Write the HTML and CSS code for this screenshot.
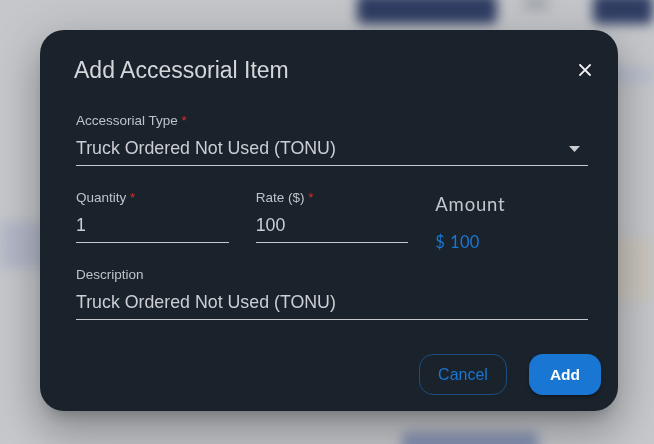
FILE: index.html
```html
<!DOCTYPE html>
<html lang="en">
<head>
<meta charset="utf-8">
<title>Add Accessorial Item</title>
<link rel="stylesheet" href="styles.css">
</head>
<body>
<div class="page" aria-hidden="true">
  <div class="topbar">
    <span class="navy-btn"></span>
    <span class="ghost-icon"></span>
    <span class="navy-btn small"></span>
  </div>
  <div class="strip-right"></div>
  <div class="band">
    <span class="band-left"></span>
    <span class="band-right"></span>
  </div>
  <div class="bottom-row">
    <span class="bottom-blob"></span>
  </div>
</div>

<div class="overlay">
  <div class="dialog" role="dialog" aria-labelledby="dlg-title">
    <div class="dialog-head">
      <h2 id="dlg-title" class="dialog-title">Add Accessorial Item</h2>
      <button class="close-btn" aria-label="Close">
        <svg width="12" height="12" viewBox="0 0 12 12"><path d="M1 1L11 11M11 1L1 11" stroke="#f2f3f4" stroke-width="1.8" stroke-linecap="square"/></svg>
      </button>
    </div>

    <div class="field type-field">
      <div class="label">Accessorial Type <span class="req">*</span></div>
      <div class="input select">
        <span>Truck Ordered Not Used (TONU)</span>
        <svg class="caret" width="11" height="6" viewBox="0 0 11 6"><path d="M0 0H11L5.5 6Z" fill="#c9ccd0"/></svg>
      </div>
    </div>

    <div class="row">
      <div class="field">
        <div class="label">Quantity <span class="req">*</span></div>
        <div class="input">1</div>
      </div>
      <div class="field">
        <div class="label">Rate ($) <span class="req">*</span></div>
        <div class="input">100</div>
      </div>
      <div class="amount">
        <div class="amount-label">Amount</div>
        <div class="amount-value">$ 100</div>
      </div>
    </div>

    <div class="field desc">
      <div class="label">Description</div>
      <div class="input">Truck Ordered Not Used (TONU)</div>
    </div>

    <div class="actions">
      <button class="btn btn-outline">Cancel</button>
      <button class="btn btn-primary">Add</button>
    </div>
  </div>
</div>
</body>
</html>
```
FILE: styles.css
```css
* { box-sizing: border-box; }
html, body { margin: 0; height: 100%; }
body {
  background: #c5c7cb;
  font-family: "Liberation Sans", Arial, sans-serif;
  overflow: hidden;
}

/* blurred page behind the dialog */
.page {
  filter: blur(6px);
  height: 444px;
}
.topbar {
  display: flex;
  align-items: flex-start;
  height: 30px;
  padding-left: 357px;
}
.navy-btn {
  display: block;
  width: 140px;
  height: 30px;
  margin-top: -6px;
  background: #2f3d63;
  border-radius: 6px;
}
.navy-btn.small { width: 60px; margin-left: 44px; }
.ghost-icon {
  display: block;
  width: 26px;
  height: 12px;
  margin-left: 26px;
  margin-top: -2px;
  background: #a3a6ad;
  border-radius: 4px;
}
.strip-right {
  height: 14px;
  margin-top: 38px;
  margin-left: 604px;
  background: #b6bdcc;
}
.band {
  display: flex;
  justify-content: space-between;
  margin-top: 140px;
  height: 70px;
}
.band-left { display: block; width: 60px; height: 46px; background: #b3b8c8; }
.band-right { display: block; width: 60px; height: 62px; margin-top: 16px; background: #c9c5bd; }
.bottom-row {
  display: flex;
  padding-left: 402px;
  margin-top: 140px;
}
.bottom-blob {
  display: block;
  width: 136px;
  height: 30px;
  background: #8592b3;
  border-radius: 6px;
}

/* overlay + dialog */
.overlay {
  position: fixed;
  inset: 0;
  display: flex;
  align-items: flex-start;
  padding: 30px 0 0 40px;
}
.dialog {
  width: 578px;
  height: 381px;
  background: #1a232c;
  border-radius: 24px;
  padding: 26px 30px 16px 36px;
  box-shadow: 0 11px 15px -7px rgba(0,0,0,0.22),
              0 24px 38px 3px rgba(0,0,0,0.16),
              0 9px 46px 8px rgba(0,0,0,0.14);
  display: flex;
  flex-direction: column;
}
.dialog-head {
  display: flex;
  align-items: center;
  justify-content: space-between;
  height: 28px;
  margin-left: -2px;
}
.dialog-title {
  margin: 0;
  font-weight: 400;
  font-size: 23px;
  line-height: 28px;
  color: #d4d7da;
}
.close-btn {
  background: none;
  border: 0;
  padding: 0;
  width: 12px;
  height: 12px;
  margin-right: -3px;
  display: flex;
}

.field {
  display: flex;
  flex-direction: column;
}
.type-field { margin-top: 29px; }
.label {
  font-size: 13.5px;
  line-height: 16px;
  color: #bfc3c7;
}
.req { color: #d32f2f; }
.input {
  margin-top: 7px;
  font-size: 17.8px;
  line-height: 24px;
  color: #cbced2;
  padding-bottom: 5px;
  border-bottom: 1px solid #c6c8cb;
}
.select {
  display: flex;
  align-items: center;
  justify-content: space-between;
  padding-right: 8px;
}
.caret { margin-top: 2px; }

.row {
  display: grid;
  grid-template-columns: repeat(3, 1fr);
  column-gap: 27px;
  margin-top: 24px;
}
.amount {
  display: flex;
  flex-direction: column;
  font-family: Lato, "Open Sans", sans-serif;
}
.amount-label {
  font-size: 18.5px;
  letter-spacing: 0.8px;
  line-height: 22px;
  color: #c3c6ca;
  margin-top: 3px;
}
.amount-value {
  margin-top: 17px;
  margin-bottom: -10px;
  font-size: 16.5px;
  letter-spacing: 0.4px;
  line-height: 20px;
  color: #1976d2;
}

.desc { margin-top: 24px; }

.actions {
  display: flex;
  justify-content: flex-end;
  gap: 22px;
  margin-top: 34px;
  margin-right: -13px;
}
.btn {
  height: 41px;
  border-radius: 14px;
  font-family: "Liberation Sans", Arial, sans-serif;
  font-size: 16px;
  cursor: pointer;
}
.btn-outline {
  width: 88px;
  background: transparent;
  border: 1px solid #1a4d80;
  color: #1976d2;
}
.btn-primary {
  width: 72px;
  background: #1976d2;
  border: 0;
  color: #ffffff;
  font-weight: 700;
  font-size: 15.5px;
  box-shadow: 0 3px 3px -2px rgba(0,0,0,0.3), 0 2px 4px rgba(0,0,0,0.2);
}
```
